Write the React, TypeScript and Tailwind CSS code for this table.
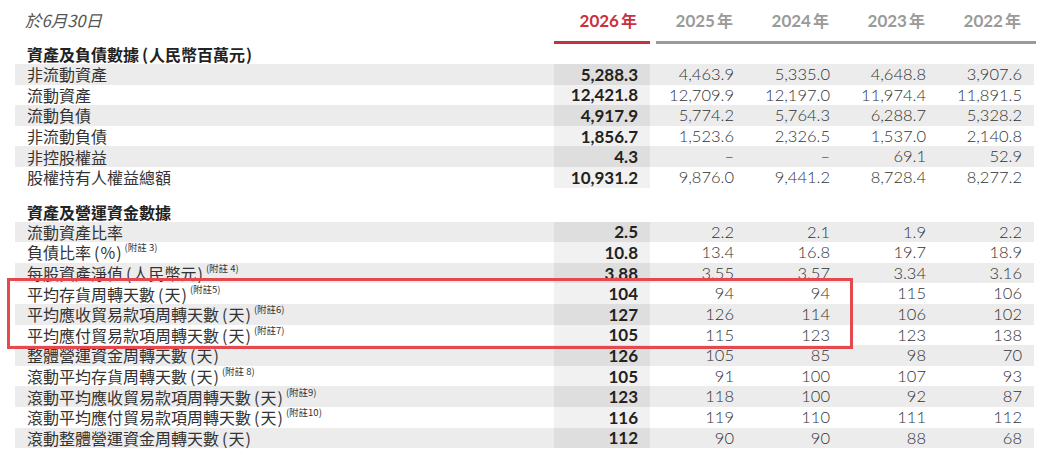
import React from "react";

type Row = { label: string; note?: string; values: string[] };

const YEARS = ["2026年", "2025年", "2024年", "2023年", "2022年"];

const balanceRows: Row[] = [
  { label: "非流動資產", values: ["5,288.3", "4,463.9", "5,335.0", "4,648.8", "3,907.6"] },
  { label: "流動資產", values: ["12,421.8", "12,709.9", "12,197.0", "11,974.4", "11,891.5"] },
  { label: "流動負債", values: ["4,917.9", "5,774.2", "5,764.3", "6,288.7", "5,328.2"] },
  { label: "非流動負債", values: ["1,856.7", "1,523.6", "2,326.5", "1,537.0", "2,140.8"] },
  { label: "非控股權益", values: ["4.3", "–", "–", "69.1", "52.9"] },
  { label: "股權持有人權益總額", values: ["10,931.2", "9,876.0", "9,441.2", "8,728.4", "8,277.2"] },
];

const workingRows: Row[] = [
  { label: "流動資產比率", values: ["2.5", "2.2", "2.1", "1.9", "2.2"] },
  { label: "負債比率(%)", note: "(附註 3)", values: ["10.8", "13.4", "16.8", "19.7", "18.9"] },
  { label: "每股資產淨值(人民幣元)", note: "(附註 4)", values: ["3.88", "3.55", "3.57", "3.34", "3.16"] },
  { label: "平均存貨周轉天數(天)", note: "(附註5)", values: ["104", "94", "94", "115", "106"] },
  { label: "平均應收貿易款項周轉天數(天)", note: "(附註6)", values: ["127", "126", "114", "106", "102"] },
  { label: "平均應付貿易款項周轉天數(天)", note: "(附註7)", values: ["105", "115", "123", "123", "138"] },
  { label: "整體營運資金周轉天數(天)", values: ["126", "105", "85", "98", "70"] },
  { label: "滾動平均存貨周轉天數(天)", note: "(附註 8)", values: ["105", "91", "100", "107", "93"] },
  { label: "滾動平均應收貿易款項周轉天數(天)", note: "(附註9)", values: ["123", "118", "100", "92", "87"] },
  { label: "滾動平均應付貿易款項周轉天數(天)", note: "(附註10)", values: ["116", "119", "110", "111", "112"] },
  { label: "滾動整體營運資金周轉天數(天)", values: ["112", "90", "90", "88", "68"] },
];

const cjk = "font-['Noto_Sans_CJK_TC','Noto_Sans',sans-serif]";
const num = "font-['Lato','Noto_Sans_CJK_TC',sans-serif]";

// the printed report sets brackets with a little air around them
function Spaced({ text }: { text: string }) {
  return (
    <>
      {text.split(/([()])/).map((part, i) =>
        part === "(" ? (
          <span key={i} className="ml-[3px] mr-[1px]">(</span>
        ) : part === ")" ? (
          <span key={i} className="ml-[1px]">)</span>
        ) : (
          <span key={i}>{part}</span>
        )
      )}
    </>
  );
}

function DataRow({ row, shaded }: { row: Row; shaded: boolean }) {
  return (
    <div
      className={`grid h-[20.6px] grid-cols-[539px_repeat(5,96px)] items-center ${
        shaded ? "bg-[#ececec]" : "bg-white"
      }`}
    >
      <div className={`${cjk} flex items-start pl-3 text-[16px] leading-none text-[#333]`}>
        <span>
          <Spaced text={row.label} />
        </span>
        {row.note && (
          <span className="ml-[3px] -mt-[1px] text-[9.5px] leading-none text-[#333]">{row.note}</span>
        )}
      </div>
      {row.values.map((v, i) => (
        <div
          key={i}
          className={`${num} flex h-full items-center justify-end pr-3 leading-none ${
            i === 0
              ? `text-[17px] font-bold text-[#222] ${shaded ? "bg-[#dedede]" : "bg-[#f1f1f1]"}`
              : "text-[16.5px] font-light text-[#333]"
          }`}
        >
          {v}
        </div>
      ))}
    </div>
  );
}

function Section({ title, rows, first }: { title: string; rows: Row[]; first?: boolean }) {
  return (
    <div className={first ? "" : "pt-[14px]"}>
      <div className={`${cjk} flex h-[20px] items-center pl-3 text-[16px] font-bold leading-none text-[#222]`}>
        <Spaced text={title} />
      </div>
      {rows.map((r, i) => (
        <DataRow key={r.label} row={r} shaded={i % 2 === 0} />
      ))}
    </div>
  );
}

export default function App() {
  return (
    <div className="relative h-[460px] w-[1053px] overflow-hidden bg-white">
      <div className="ml-[15px] w-[1019px]">
        <div className="grid h-[41px] grid-cols-[539px_repeat(5,96px)] items-center">
          <div className={`${cjk} pl-[10px] text-[16.5px] italic text-[#555]`}>於6月30日</div>
          {YEARS.map((y, i) => (
            <div
              key={y}
              className={`${num} pr-[13px] text-right text-[17px] font-bold ${
                i === 0 ? "text-[#c8323e]" : "text-[#9a9a9a]"
              }`}
            >
              {y.slice(0, 4)}
              <span className={`${cjk} ml-[2px] text-[16px]`}>年</span>
            </div>
          ))}
        </div>
        <div className="grid h-[3px] grid-cols-[539px_96px_6px_1fr]">
          <div />
          <div className="bg-[#c8323e]" />
          <div />
          <div className="-mr-[2px] bg-[#9a9a9a]" />
        </div>
        <Section title="資產及負債數據(人民幣百萬元)" rows={balanceRows} first />
        <Section title="資產及營運資金數據" rows={workingRows} />
      </div>
      <div className="pointer-events-none absolute left-[7px] top-[278px] h-[71px] w-[846px] border-[3px] border-[#e3494f]" />
    </div>
  );
}
